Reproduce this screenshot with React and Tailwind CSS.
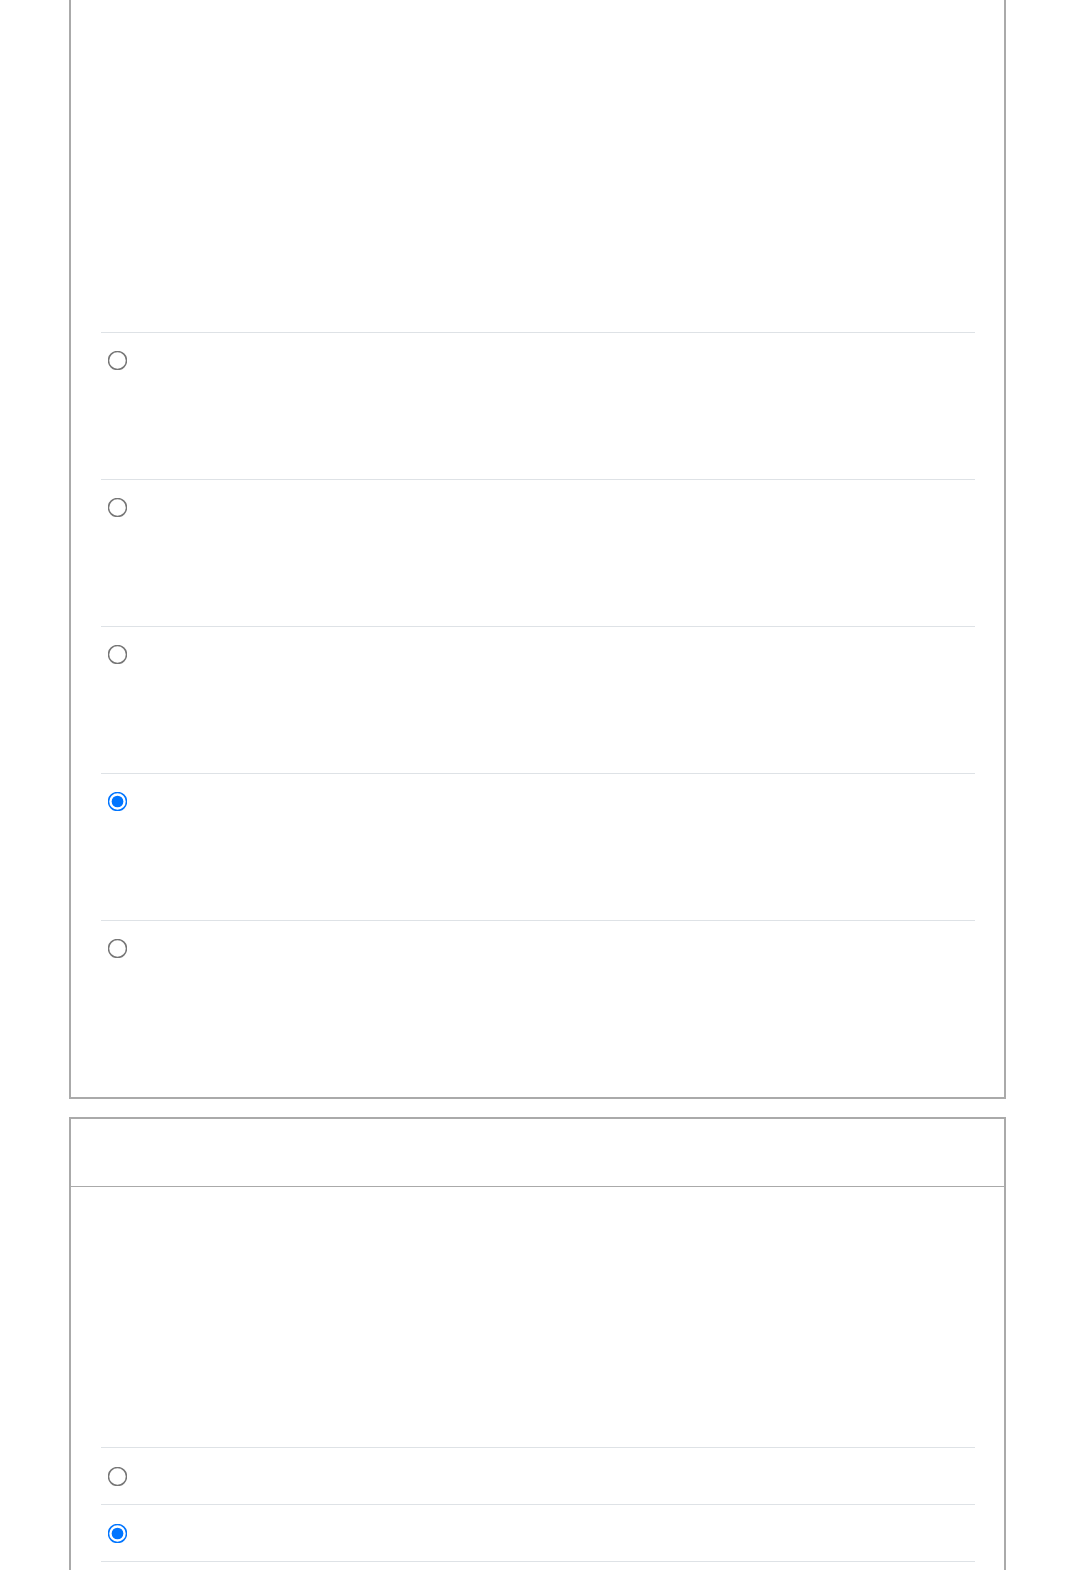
import React from "react";

function Row({ h, pt, checked, name }) {
  return (
    <div className={`border-t border-[#dee2e6] ${h} ${pt} pl-[10px] flex items-start`}>
      <input
        type="radio"
        name={name}
        defaultChecked={checked}
        className="m-0 w-[13px] h-[13px] block scale-150 origin-center"
      />
    </div>
  );
}

export default function App() {
  return (
    <div className="bg-white min-h-[1570px] font-['Liberation_Sans',sans-serif]">
      <div className="ml-[69px] w-[937px] border-x-2 border-b-2 border-[#aaaaaa] pl-[30px] pr-[29px] pb-[30px]">
        <div className="h-[332px]" />
        <Row h="h-[147px]" pt="pt-[21px]" name="q1" />
        <Row h="h-[147px]" pt="pt-[21px]" name="q1" />
        <Row h="h-[147px]" pt="pt-[21px]" name="q1" />
        <Row h="h-[147px]" pt="pt-[21px]" name="q1" checked />
        <Row h="h-[147px]" pt="pt-[21px]" name="q1" />
      </div>
      <div className="ml-[69px] w-[937px] mt-[18px] border-2 border-b-0 border-[#aaaaaa]">
        <div className="h-[68px] border-b border-[#aaaaaa]" />
        <div className="pl-[30px] pr-[29px]">
          <div className="h-[260px]" />
          <Row h="h-[57px]" pt="pt-[22px]" name="q2" />
          <Row h="h-[57px]" pt="pt-[22px]" name="q2" checked />
          <Row h="h-[57px]" pt="pt-[22px]" name="q2" />
        </div>
      </div>
    </div>
  );
}
